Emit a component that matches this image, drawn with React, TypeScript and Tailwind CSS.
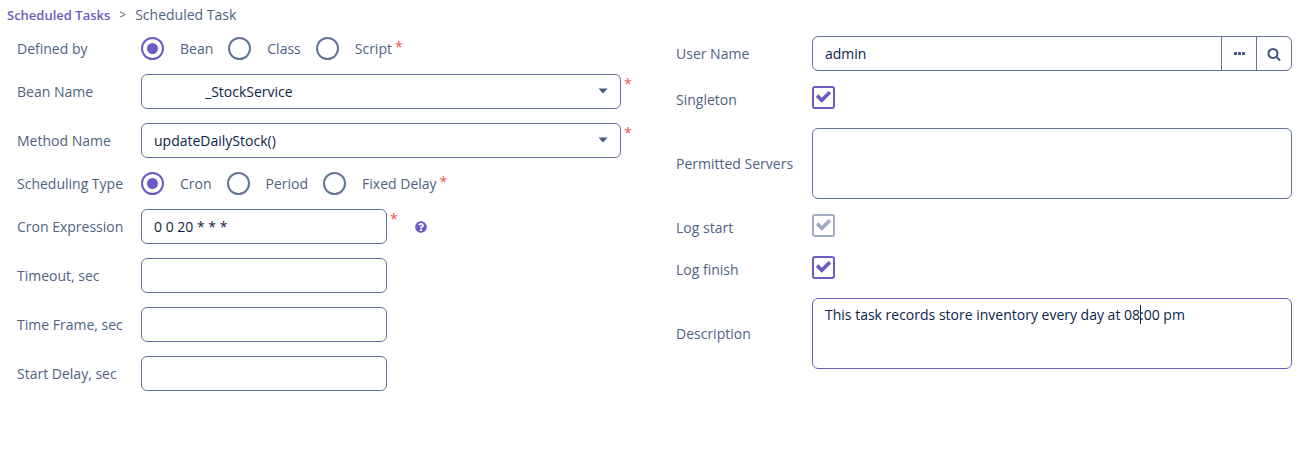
import { useState } from "react";
import type { ReactNode } from "react";
import { FaQuestionCircle } from "react-icons/fa";

const inputClass =
  "h-[35px] rounded-md border border-[#647399] bg-white px-3 text-sm text-[#0b2447] outline-none";

function Field({ label, id, children }: { label: string; id?: string; children: ReactNode }) {
  return (
    <div className="flex items-center">
      <label htmlFor={id} className="w-[124px] shrink-0 whitespace-nowrap">
        {label}
      </label>
      {children}
    </div>
  );
}

function WideField({ label, id, children }: { label: string; id: string; children: ReactNode }) {
  return (
    <div className="flex items-center">
      <label htmlFor={id} className="w-[136px] shrink-0 whitespace-nowrap">
        {label}
      </label>
      {children}
    </div>
  );
}

function Required() {
  return <span className="w-3 self-start pl-[3px] leading-5 text-[#ee5253]">*</span>;
}

function RadioGroup({
  label,
  name,
  options,
}: {
  label: string;
  name: string;
  options: string[];
}) {
  const [selected, setSelected] = useState(options[0]);

  return (
    <div role="radiogroup" aria-label={label} className="flex h-[23px] items-center gap-[15px]">
      {options.map((option) => (
        <label key={option} className="flex items-center gap-4">
          <input
            type="radio"
            name={name}
            checked={selected === option}
            onChange={() => setSelected(option)}
            className="size-[23px] appearance-none rounded-full border-2 border-[#647399] bg-white bg-clip-content p-1 checked:border-[#6e5ac3] checked:bg-[#6e5ac3]"
          />
          {option}
        </label>
      ))}
    </div>
  );
}

function Select({ id, value, className }: { id: string; value: string; className: string }) {
  return (
    <div className="relative flex-1">
      <select id={id} className={`${inputClass} w-full appearance-none ${className}`}>
        <option>{value}</option>
      </select>
      <svg
        viewBox="0 0 10 6"
        className="pointer-events-none absolute top-[14px] right-[13px] h-1.5 w-2.5 fill-[#455a80]"
      >
        <path d="M0.5 0.5h9L5 5.5z" />
      </svg>
    </div>
  );
}

function Checkbox({ id, disabled = false }: { id: string; disabled?: boolean }) {
  return (
    <div className="relative h-[27px]">
      <input
        id={id}
        type="checkbox"
        defaultChecked
        disabled={disabled}
        className="peer block size-[23px] appearance-none rounded-[3px] border-2 border-[#6e5ac3] bg-white disabled:border-[#a2abc2]"
      />
      <svg
        viewBox="0 0 1792 1792"
        className="pointer-events-none absolute top-[2px] left-[3px] size-[17px] fill-[#6e5ac3] opacity-0 peer-checked:opacity-100 peer-disabled:fill-[#a2abc2]"
      >
        <path d="M1671 566q0 40-28 68l-724 724-136 136q-28 28-68 28t-68-28l-136-136-362-362q-28-28-28-68t28-68l136-136q28-28 68-28t68 28l294 295 656-657q28-28 68-28t68 28l136 136q28 28 28 68z" />
      </svg>
    </div>
  );
}

export default function App() {
  return (
    <div className="min-h-screen bg-white font-['Open_Sans',sans-serif] text-sm text-[#4f6282]">
      <nav className="flex h-[37px] items-start gap-[9px] px-[7px] pt-[5px]">
        <a href="#tasks" className="text-[13px] leading-5 font-semibold text-[#6e5ac3]">
          Scheduled Tasks
        </a>
        <span className="text-xs leading-5">&gt;</span>
        <span>Scheduled Task</span>
      </nav>

      <form className="grid grid-cols-2 items-start gap-[43px] pr-[19px] pl-[17px]">
        <div className="flex flex-col gap-[14px]">
          <Field label="Defined by">
            <RadioGroup
              label="Defined by"
              name="definedBy"
              options={["Bean", "Class", "Script"]}
            />
            <Required />
          </Field>
          <Field label="Bean Name" id="beanName">
            <Select id="beanName" value="_StockService" className="pl-[63px]" />
            <Required />
          </Field>
          <Field label="Method Name" id="methodName">
            <Select id="methodName" value="updateDailyStock()" className="pl-3" />
            <Required />
          </Field>
          <Field label="Scheduling Type">
            <RadioGroup
              label="Scheduling Type"
              name="schedulingType"
              options={["Cron", "Period", "Fixed Delay"]}
            />
            <Required />
          </Field>
          <Field label="Cron Expression" id="cron">
            <input id="cron" defaultValue="0 0 20 * * *" className={`${inputClass} w-[246px]`} />
            <Required />
            <button type="button" aria-label="Help" className="ml-4">
              <FaQuestionCircle className="size-3 text-[#6e5ac3]" />
            </button>
          </Field>
          <Field label="Timeout, sec" id="timeout">
            <input id="timeout" className={`${inputClass} w-[246px]`} />
          </Field>
          <Field label="Time Frame, sec" id="timeFrame">
            <input id="timeFrame" className={`${inputClass} w-[246px]`} />
          </Field>
          <Field label="Start Delay, sec" id="startDelay">
            <input id="startDelay" className={`${inputClass} w-[246px]`} />
          </Field>
        </div>

        <div className="-mt-px flex flex-col gap-[15px]">
          <WideField label="User Name" id="userName">
            <div className="flex h-[35px] flex-1 overflow-hidden rounded-md border border-[#647399]">
              <input
                id="userName"
                defaultValue="admin"
                className="min-w-0 flex-1 px-3 text-[#0b2447] outline-none"
              />
              <button
                type="button"
                aria-label="Select user"
                className="flex w-[35px] items-center justify-center border-l border-[#647399]"
              >
                <svg viewBox="0 0 11 3" className="h-[3px] w-[11px] fill-[#455a80]">
                  <rect width="3" height="3" rx="0.6" />
                  <rect x="4" width="3" height="3" rx="0.6" />
                  <rect x="8" width="3" height="3" rx="0.6" />
                </svg>
              </button>
              <button
                type="button"
                aria-label="Open user"
                className="flex w-[35px] items-center justify-center border-l border-[#647399]"
              >
                <svg viewBox="0 0 1792 1792" className="size-[14px] fill-[#455a80]">
                  <path d="M1216 832q0-185-131.5-316.5t-316.5-131.5-316.5 131.5-131.5 316.5 131.5 316.5 316.5 131.5 316.5-131.5 131.5-316.5zm512 832q0 52-38 90t-90 38q-54 0-90-38l-343-342q-179 124-399 124-143 0-273.5-55.5t-225-150-150-225-55.5-273.5 55.5-273.5 150-225 225-150 273.5-55.5 273.5 55.5 225 150 150 225 55.5 273.5q0 220-124 399l343 343q37 37 37 90z" />
                </svg>
              </button>
            </div>
          </WideField>
          <WideField label="Singleton" id="singleton">
            <Checkbox id="singleton" />
          </WideField>
          <WideField label="Permitted Servers" id="servers">
            <textarea id="servers" className={`${inputClass} h-[71px] flex-1 resize-none py-1.5`} />
          </WideField>
          <WideField label="Log start" id="logStart">
            <Checkbox id="logStart" disabled />
          </WideField>
          <WideField label="Log finish" id="logFinish">
            <Checkbox id="logFinish" />
          </WideField>
          <WideField label="Description" id="description">
            <div className="relative flex-1">
              <textarea
                id="description"
                defaultValue="This task records store inventory every day at 08:00 pm"
                className="block h-[71px] w-full resize-none rounded-md border border-[#6e5ac3] px-3 py-1.5 text-[#0b2447] outline-none"
              />
              {/* text cursor */}
              <span className="absolute top-[7px] left-[328px] h-[19px] w-px bg-[#0b2447]" />
            </div>
          </WideField>
        </div>
      </form>
    </div>
  );
}
